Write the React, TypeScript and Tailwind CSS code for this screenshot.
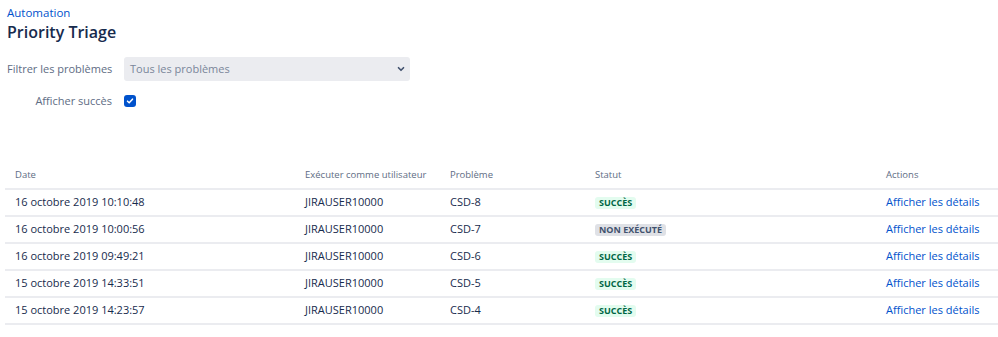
import { FiChevronDown } from 'react-icons/fi'

const rows = [
  { date: '16 octobre 2019 10:10:48', user: 'JIRAUSER10000', issue: 'CSD-8', ok: true },
  { date: '16 octobre 2019 10:00:56', user: 'JIRAUSER10000', issue: 'CSD-7', ok: false },
  { date: '16 octobre 2019 09:49:21', user: 'JIRAUSER10000', issue: 'CSD-6', ok: true },
  { date: '15 octobre 2019 14:33:51', user: 'JIRAUSER10000', issue: 'CSD-5', ok: true },
  { date: '15 octobre 2019 14:23:57', user: 'JIRAUSER10000', issue: 'CSD-4', ok: true },
]

function StatusBadge({ ok }: { ok: boolean }) {
  if (ok) {
    return (
      <span className="inline-block rounded-[3px] bg-[#E3FCEF] px-[4px] text-[9px] font-bold leading-[12px] text-[#006644]">
        SUCCÈS
      </span>
    )
  }
  return (
    <span className="inline-block rounded-[3px] bg-[#DFE1E6] px-[4px] text-[9px] font-bold leading-[12px] text-[#42526E]">
      NON EXÉCUTÉ
    </span>
  )
}

export default function App() {
  return (
    <div className="min-h-[337px] w-[998px] bg-white font-['Open_Sans',sans-serif] text-[#172B4D]">
      <div className="px-[7px] pt-[5px]">
        <a className="block text-[11.5px] leading-[16px] text-[#0052CC]">Automation</a>
        <h1 className="text-[16px] font-semibold leading-[22px] text-[#172B4D]">Priority Triage</h1>

        <div className="mt-[14px] flex items-center">
          <label className="w-[105px] whitespace-nowrap text-right text-[11px] text-[#5E6C84]">Filtrer les problèmes</label>
          <div className="ml-[12px] flex h-[24px] w-[286px] items-center justify-between rounded-[3px] bg-[#EBECF0] pl-[6px] pr-[4px] text-[11px] text-[#7A869A]">
            <span>Tous les problèmes</span>
            <FiChevronDown className="h-[10px] w-[10px] stroke-[4] text-[#42526E]" />
          </div>
        </div>

        <div className="mt-[12px] flex h-[16px] items-center">
          <label className="w-[105px] whitespace-nowrap text-right text-[11px] text-[#5E6C84]">Afficher succès</label>
          <div className="ml-[12px] flex h-[12px] w-[12px] items-center justify-center rounded-[3px] bg-[#0052CC]">
            <svg viewBox="0 0 12 12" className="h-[10px] w-[10px]">
              <path d="M3 6.2l2 2 4-4.4" fill="none" stroke="white" strokeWidth="1.8" strokeLinecap="round" strokeLinejoin="round" />
            </svg>
          </div>
        </div>
      </div>

      <table className="ml-[5px] mt-[53px] w-[993px] table-fixed border-collapse text-left text-[11px]">
        <colgroup>
          <col className="w-[290px]" />
          <col className="w-[145px]" />
          <col className="w-[145px]" />
          <col className="w-[291px]" />
          <col />
        </colgroup>
        <thead>
          <tr className="border-b-2 border-[#EBECF0] text-[9.5px] text-[#5E6C84]">
            <th className="h-[27px] pl-[10px] font-normal">Date</th>
            <th className="pl-[10px] font-normal">Exécuter comme utilisateur</th>
            <th className="pl-[10px] font-normal">Problème</th>
            <th className="pl-[10px] font-normal">Statut</th>
            <th className="pl-[10px] font-normal">Actions</th>
          </tr>
        </thead>
        <tbody>
          {rows.map((r) => (
            <tr key={r.issue} className="border-b-2 border-[#EBECF0]">
              <td className="h-[27px] pl-[10px]">{r.date}</td>
              <td className="pl-[10px]">{r.user}</td>
              <td className="pl-[10px]">{r.issue}</td>
              <td className="pl-[10px]">
                <StatusBadge ok={r.ok} />
              </td>
              <td className="pl-[10px]">
                <a className="text-[#0052CC]">Afficher les détails</a>
              </td>
            </tr>
          ))}
        </tbody>
      </table>
    </div>
  )
}
